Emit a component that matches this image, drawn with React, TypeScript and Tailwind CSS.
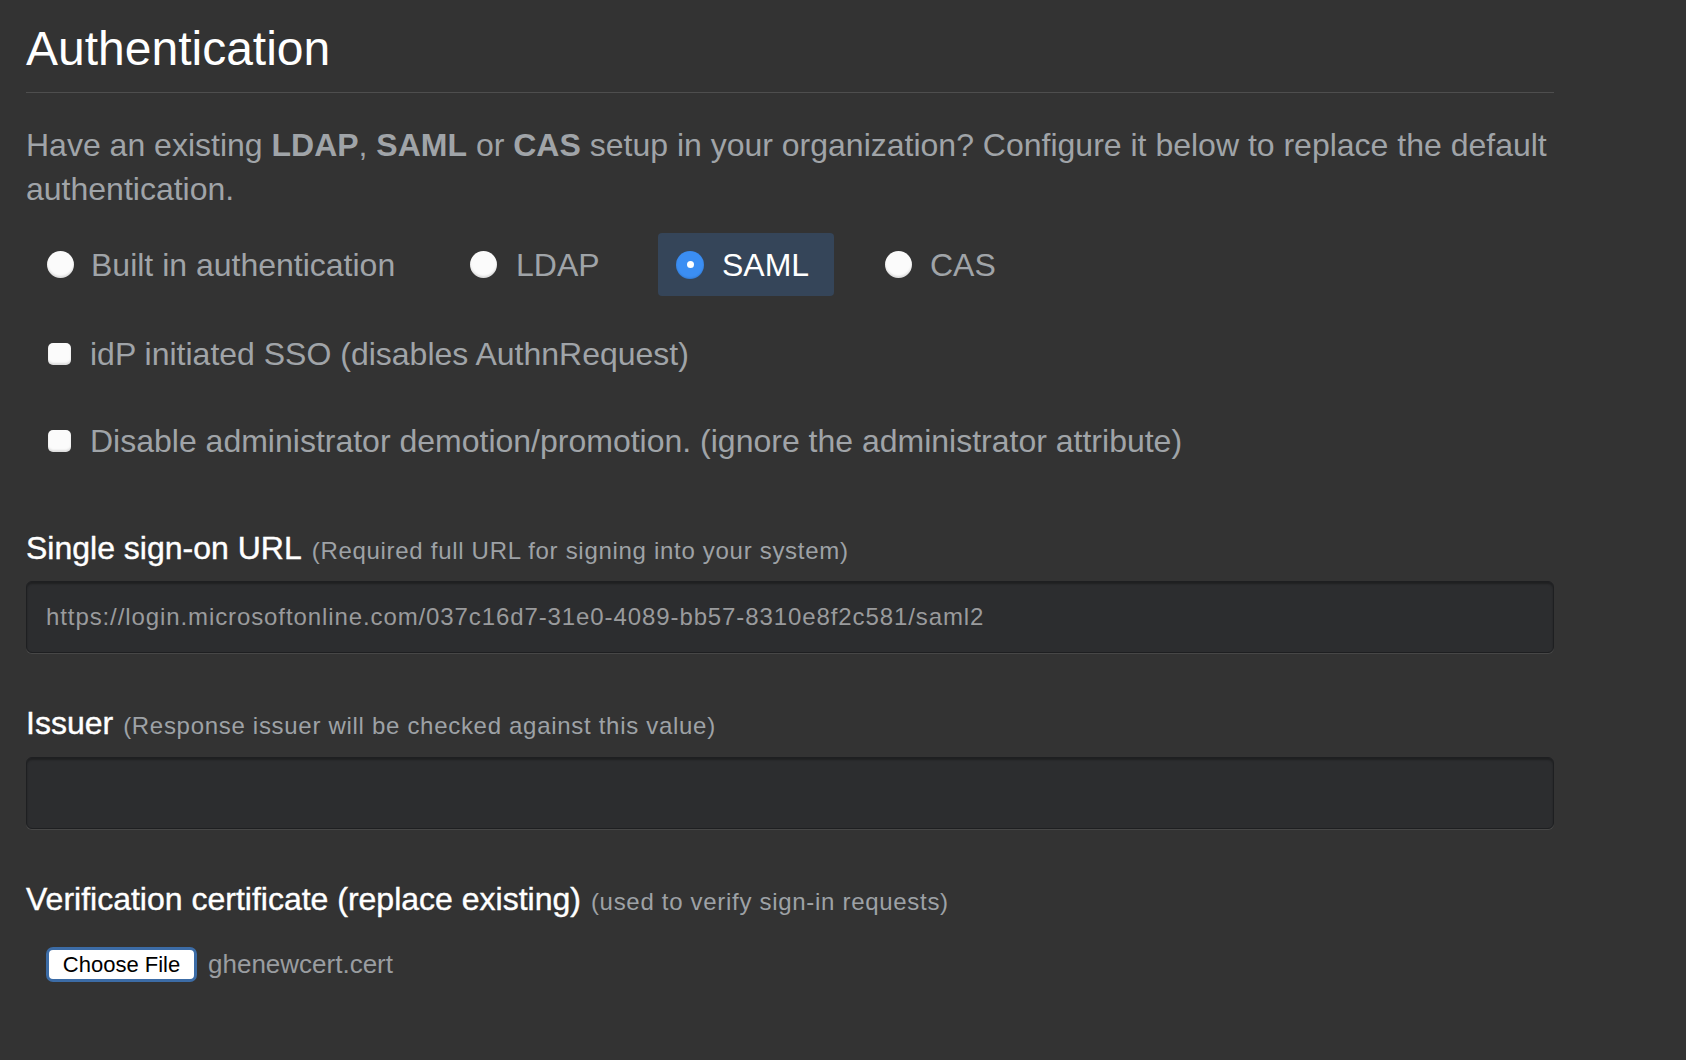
import React from "react";

function Radio({ checked }: { checked?: boolean }) {
  if (checked) {
    return (
      <span className="flex h-[28px] w-[28px] shrink-0 items-center justify-center rounded-full bg-[#3b8ef3] shadow-[inset_0_-1px_2px_rgba(0,0,0,0.15)]">
        <span className="h-[7px] w-[7px] rounded-full bg-white" />
      </span>
    );
  }
  return (
    <span className="h-[27px] w-[27px] shrink-0 rounded-full bg-[#fbfbfb] shadow-[inset_0_-2px_2px_rgba(0,0,0,0.12)]" />
  );
}

function Checkbox() {
  return (
    <span className="h-[22px] w-[23px] shrink-0 rounded-[5px] bg-[#fbfbfb] shadow-[inset_0_-2px_2px_rgba(0,0,0,0.12)]" />
  );
}

function FieldLabel({ title, help }: { title: string; help: string }) {
  return (
    <div className="flex items-baseline gap-[10px] leading-[44px] whitespace-nowrap">
      <span className="text-[32px] text-white [-webkit-text-stroke:0.4px_white]">{title}</span>
      <span className="text-[24px] tracking-[0.7px] text-[#9ea2a6]">{help}</span>
    </div>
  );
}

function TextInput({ value }: { value?: string }) {
  return (
    <div className="flex h-[72px] w-full items-center rounded-[6px] border border-[#1e1f21] bg-[#2c2d2f] pl-[19px] shadow-[inset_0_2px_2px_rgba(0,0,0,0.3),0_1px_0_rgba(255,255,255,0.1)]">
      <span className="text-[24px] tracking-[0.9px] text-[#9a9b9d] whitespace-nowrap">{value ?? ""}</span>
    </div>
  );
}

export default function App() {
  return (
    <div className="min-h-screen w-full bg-[#333333] font-['Liberation_Sans',Arial,sans-serif]">
      <div className="w-[1554px] pl-[26px] pt-[21px] pb-[60px]">
        <h1 className="border-b border-[#4e4e4e] pb-[15px] text-[48px] leading-[56px] font-normal text-white">
          Authentication
        </h1>

        <p className="mt-[30px] whitespace-nowrap text-[32px] leading-[44px] text-[#a0a4a8]">
          Have an existing <b className="font-bold">LDAP</b>, <b className="font-bold">SAML</b> or{" "}
          <b className="font-bold">CAS</b> setup in your organization? Configure it below to replace the default
          <br />
          authentication.
        </p>

        <div className="mt-[22px] flex h-[63px] items-center">
          <label className="ml-[3px] flex h-[63px] w-[423px] items-center gap-[17px] pl-[18px] text-[32px] text-[#a0a4a8] whitespace-nowrap">
            <Radio />
            <span>Built in authentication</span>
          </label>
          <label className="flex h-[63px] w-[206px] items-center gap-[19px] pl-[18px] text-[32px] text-[#a0a4a8] whitespace-nowrap">
            <Radio />
            <span>LDAP</span>
          </label>
          <label className="flex h-[63px] w-[176px] items-center gap-[18px] rounded-[4px] bg-[#354559] pl-[18px] text-[32px] text-white whitespace-nowrap">
            <Radio checked />
            <span>SAML</span>
          </label>
          <label className="ml-[33px] flex h-[63px] items-center gap-[18px] pl-[18px] text-[32px] text-[#a0a4a8] whitespace-nowrap">
            <Radio />
            <span>CAS</span>
          </label>
        </div>

        <div className="mt-[36px] flex h-[44px] items-center gap-[19px] pl-[22px] text-[32px] text-[#a0a4a8] whitespace-nowrap">
          <Checkbox />
          <span>idP initiated SSO (disables AuthnRequest)</span>
        </div>
        <div className="mt-[43px] flex h-[44px] items-center gap-[19px] pl-[22px] text-[32px] text-[#a0a4a8] whitespace-nowrap">
          <Checkbox />
          <span>Disable administrator demotion/promotion. (ignore the administrator attribute)</span>
        </div>

        <div className="mt-[63px]">
          <FieldLabel title="Single sign-on URL" help="(Required full URL for signing into your system)" />
        </div>
        <div className="mt-[8px]">
          <TextInput value="https://login.microsoftonline.com/037c16d7-31e0-4089-bb57-8310e8f2c581/saml2" />
        </div>

        <div className="mt-[48px]">
          <FieldLabel title="Issuer" help="(Response issuer will be checked against this value)" />
        </div>
        <div className="mt-[9px]">
          <TextInput />
        </div>

        <div className="mt-[48px]">
          <FieldLabel title="Verification certificate (replace existing)" help="(used to verify sign-in requests)" />
        </div>
        <div className="mt-[21px] flex items-center gap-[11px] pl-[20px]">
          <button className="flex h-[35px] w-[151px] items-center justify-center rounded-[7px] border-[3px] border-[#3c6ca6] bg-white text-[22px] text-black">
            Choose File
          </button>
          <span className="text-[26px] text-[#9a9da0]">ghenewcert.cert</span>
        </div>
      </div>
    </div>
  );
}
